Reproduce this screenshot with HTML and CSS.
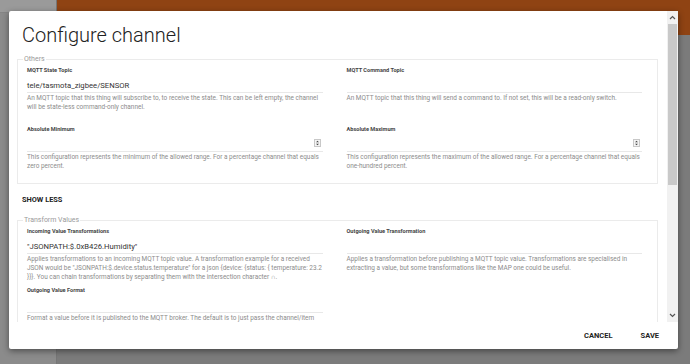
FILE: index.html
```html
<!DOCTYPE html>
<html>
<head>
    <title>Configure channel</title>
    <link rel="stylesheet" href="styles.css">
</head>
<body>
    <div class="app">
        <aside class="sidebar">
            <div class="sidebar-top"></div>
        </aside>
        <div class="main">
            <header class="topbar"></header>
        </div>
    </div>

    <div class="dialog">
        <div class="dialog-body">
            <div class="dialog-content">
                <h1 class="title">Configure channel</h1>

                <fieldset class="group">
                    <legend>Others</legend>
                    <div class="fields">
                        <div class="field">
                            <div class="label">MQTT State Topic</div>
                            <div class="input">tele/tasmota_zigbee/SENSOR</div>
                            <div class="desc">An MQTT topic that this thing will subscribe to, to receive the state. This can be left empty, the channel will be state-less command-only channel.</div>
                        </div>
                        <div class="field">
                            <div class="label">MQTT Command Topic</div>
                            <div class="input"></div>
                            <div class="desc">An MQTT topic that this thing will send a command to. If not set, this will be a read-only switch.</div>
                        </div>
                        <div class="field">
                            <div class="label">Absolute Minimum</div>
                            <div class="input number">
                                <svg class="spin" width="7" height="8" viewBox="0 0 7 8"><rect x="0.5" y="0.5" width="6" height="7" fill="#f4f4f4" stroke="#c8c8c8"/><path d="M2 3.3 L3.5 1.8 L5 3.3 Z M2 4.7 L3.5 6.2 L5 4.7 Z" fill="#444"/></svg>
                            </div>
                            <div class="desc">This configuration represents the minimum of the allowed range. For a percentage channel that equals zero percent.</div>
                        </div>
                        <div class="field">
                            <div class="label">Absolute Maximum</div>
                            <div class="input number">
                                <svg class="spin" width="7" height="8" viewBox="0 0 7 8"><rect x="0.5" y="0.5" width="6" height="7" fill="#f4f4f4" stroke="#c8c8c8"/><path d="M2 3.3 L3.5 1.8 L5 3.3 Z M2 4.7 L3.5 6.2 L5 4.7 Z" fill="#444"/></svg>
                            </div>
                            <div class="desc">This configuration represents the maximum of the allowed range. For a percentage channel that equals one-hundred percent.</div>
                        </div>
                    </div>
                </fieldset>

                <div class="show-less">SHOW LESS</div>

                <fieldset class="group">
                    <legend>Transform Values</legend>
                    <div class="fields">
                        <div class="field">
                            <div class="label">Incoming Value Transformations</div>
                            <div class="input">"JSONPATH:$.0xB426.Humidity"</div>
                            <div class="desc">Applies transformations to an incoming MQTT topic value. A transformation example for a received JSON would be "JSONPATH:$.device.status.temperature" for a json {device: {status: { temperature: 23.2 }}}. You can chain transformations by separating them with the intersection character ∩.</div>
                        </div>
                        <div class="field">
                            <div class="label">Outgoing Value Transformation</div>
                            <div class="input"></div>
                            <div class="desc">Applies a transformation before publishing a MQTT topic value. Transformations are specialised in extracting a value, but some transformations like the MAP one could be useful.</div>
                        </div>
                        <div class="field">
                            <div class="label">Outgoing Value Format</div>
                            <div class="input"></div>
                            <div class="desc">Format a value before it is published to the MQTT broker. The default is to just pass the channel/item state.</div>
                        </div>
                    </div>
                </fieldset>
            </div>

            <div class="scrollbar">
                <div class="scroll-btn">
                    <svg width="7" height="5" viewBox="0 0 7 5"><path d="M1 4 L3.5 1.5 L6 4" fill="none" stroke="#555" stroke-width="1.2"/></svg>
                </div>
                <div class="scroll-thumb"></div>
                <div class="scroll-space"></div>
                <div class="scroll-btn">
                    <svg width="7" height="5" viewBox="0 0 7 5"><path d="M1 1 L3.5 3.5 L6 1" fill="none" stroke="#555" stroke-width="1.2"/></svg>
                </div>
            </div>
        </div>

        <div class="dialog-actions">
            <button class="btn">CANCEL</button>
            <button class="btn">SAVE</button>
        </div>
    </div>
</body>
</html>
```

FILE: styles.css
```css
body {
    margin: 0;
    width: 690px;
    height: 364px;
    overflow: hidden;
    font-family: Roboto, "Liberation Sans", sans-serif;
    background: #7b7b7b;
}

.app {
    display: grid;
    grid-template-columns: 57px 1fr;
    height: 364px;
}

.sidebar {
    background: #8b8b8b;
    border-right: 1px solid #767676;
}

.sidebar-top {
    height: 12px;
    background: #9a9a9a;
    border-bottom: 1px solid #858585;
}

.main {
    background: #7b7b7b;
}

.topbar {
    height: 35px;
    background: #8f4313;
}

/* dialog */
.dialog {
    position: absolute;
    left: 9px;
    top: 11px;
    width: 669px;
    height: 338px;
    background: white;
    border-radius: 2px;
    box-shadow: 0 2px 6px rgba(0,0,0,0.45);
    display: flex;
    flex-direction: column;
}

.dialog-body {
    display: flex;
    height: 311px;
    overflow: hidden;
}

.dialog-content {
    flex: 1;
    padding: 12px 9px 0 8px;
    overflow: hidden;
}

.title {
    margin: 0 0 7px 5px;
    font-size: 20px;
    font-weight: 300;
    line-height: 24px;
    color: #222;
}

.group {
    margin: 0;
    padding: 1px 0 0 0;
    border: 1px solid #ebebeb;
}

.group legend {
    margin-left: 5px;
    padding: 0 1px;
    font-size: 7px;
    line-height: 10px;
    color: #9a9a9a;
}

.fields {
    display: grid;
    grid-template-columns: 1fr 1fr;
}

.field {
    padding: 0 15px 0 9px;
}

.label {
    font-size: 5.6px;
    font-weight: bold;
    line-height: 10px;
    color: #444;
}

.input {
    height: 18px;
    padding-top: 6px;
    box-sizing: border-box;
    border-bottom: 1px solid #e8e8e8;
    font-size: 7.7px;
    line-height: 10px;
    color: #333;
}

.input.number {
    display: flex;
    justify-content: flex-end;
    padding-top: 5px;
}

.spin {
    margin-right: 2px;
}

.desc {
    margin-top: 1px;
    min-height: 30px;
    font-size: 6.45px;
    line-height: 8.8px;
    color: #8c8c8c;
}

.show-less {
    margin: 11px 0 10px 5px;
    font-size: 7.4px;
    font-weight: bold;
    line-height: 10px;
    color: #222;
}

/* fake scrollbar */
.scrollbar {
    width: 11px;
    background: #f1f1f1;
    display: flex;
    flex-direction: column;
}

.scroll-btn {
    height: 13px;
    display: flex;
    align-items: center;
    justify-content: center;
}

.scroll-thumb {
    height: 161px;
    margin: 0 1px;
    background: #c9c9c9;
}

.scroll-space {
    flex: 1;
}

.dialog-actions {
    flex: 1;
    display: flex;
    justify-content: flex-end;
    align-items: center;
    gap: 28px;
    padding-right: 19px;
}

.btn {
    background: none;
    border: none;
    padding: 0;
    font-family: Roboto, "Liberation Sans", sans-serif;
    font-size: 7.5px;
    font-weight: bold;
    color: #222;
    cursor: pointer;
}
```
